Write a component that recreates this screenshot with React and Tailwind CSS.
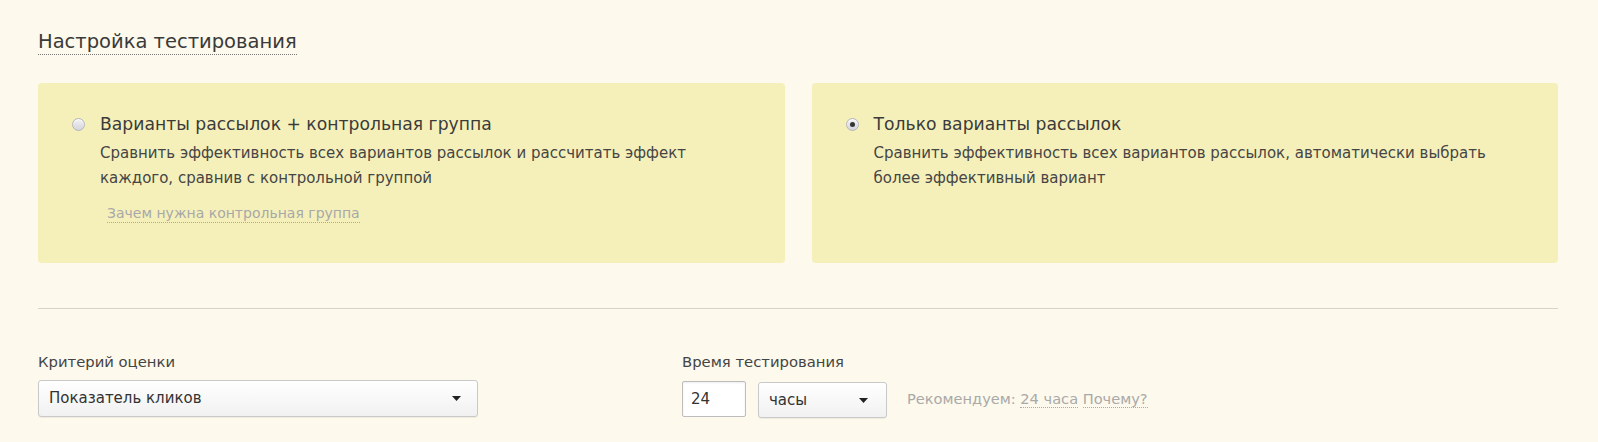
const font = { fontFamily: '"DejaVu Sans", "Noto Sans", sans-serif' };

const Radio = ({ checked }) => (
  <span className="mt-[5px] flex h-[13px] w-[13px] shrink-0 items-center justify-center rounded-full border border-[#b5b5bd] bg-gradient-to-b from-[#f2f2f6] to-[#d4d4dc] shadow-[inset_0_1px_1px_rgba(255,255,255,0.8)]">
    {checked && <span className="h-[5px] w-[5px] rounded-full bg-[#333]" />}
  </span>
);

const Caret = () => (
  <svg width="9" height="5" viewBox="0 0 9 5" className="shrink-0">
    <path d="M0 0h9L4.5 5z" fill="#222" />
  </svg>
);

const Option = ({ checked, title, desc, link }) => (
  <div className="flex h-[180px] flex-1 gap-[15px] rounded-[4px] bg-[#f5f0ba] pl-[34px] pr-6 pt-[30px]">
    <Radio checked={checked} />
    <div>
      <p className="text-[17.2px] leading-[22px] text-[#3b3b3b]">{title}</p>
      <p className="mt-[6px] max-w-[620px] text-[15px] leading-[25px] text-[#454545]">{desc}</p>
      {link && (
        <span className="ml-[7px] mt-[14px] inline-block border-b border-dotted border-[#aaa] text-[14px] leading-[17px] text-[#a8a8a8]">
          {link}
        </span>
      )}
    </div>
  </div>
);

export default function App() {
  return (
    <div style={font} className="min-h-screen bg-[#fdf9ec] pl-[38px] pr-[40px] pt-[30px]">
      <h1 className="inline-block border-b border-dotted border-[#777] text-[19.5px] leading-[24px] text-[#3a3a3a]">
        Настройка тестирования
      </h1>

      <div className="mt-[28px] flex gap-[27px]">
        <Option
          title="Варианты рассылок + контрольная группа"
          desc="Сравнить эффективность всех вариантов рассылок и рассчитать эффект каждого, сравнив с контрольной группой"
          link="Зачем нужна контрольная группа"
        />
        <Option
          checked
          title="Только варианты рассылок"
          desc="Сравнить эффективность всех вариантов рассылок, автоматически выбрать более эффективный вариант"
        />
      </div>

      <div className="mt-[45px] h-px bg-[#d6d3c8]" />

      <div className="mt-[43px] flex text-[14.8px] text-[#444]">
        <div className="w-[644px]">
          <p className="leading-[20px]">Критерий оценки</p>
          <div className="mt-[8px] flex h-[37px] w-[440px] items-center justify-between rounded-[3px] border border-[#c9c9c9] bg-gradient-to-b from-white to-[#f1f1f1] pl-[10px] pr-[16px] shadow-[0_1px_1px_rgba(0,0,0,0.06)]">
            <span className="text-[15px] text-[#333]">Показатель кликов</span>
            <Caret />
          </div>
        </div>
        <div>
          <p className="leading-[20px]">Время тестирования</p>
          <div className="mt-[8px] flex items-center">
            <div className="flex h-[36px] w-[64px] items-center rounded-[2px] border border-[#bdbdbd] bg-white pl-[8px] text-[15px] text-[#333] shadow-[inset_0_1px_2px_rgba(0,0,0,0.08)]">
              24
            </div>
            <div className="ml-[12px] mt-[2px] flex h-[36px] w-[129px] items-center justify-between rounded-[3px] border border-[#c9c9c9] bg-gradient-to-b from-white to-[#f1f1f1] pl-[10px] pr-[18px] shadow-[0_1px_1px_rgba(0,0,0,0.06)]">
              <span className="text-[15px] text-[#333]">часы</span>
              <Caret />
            </div>
            <span className="ml-[20px] text-[14.6px] text-[#a9a9a9]">
              Рекомендуем:{" "}
              <span className="border-b border-dotted border-[#aaa]">24 часа</span>{" "}
              <span className="border-b border-dotted border-[#aaa]">Почему?</span>
            </span>
          </div>
        </div>
      </div>
    </div>
  );
}
